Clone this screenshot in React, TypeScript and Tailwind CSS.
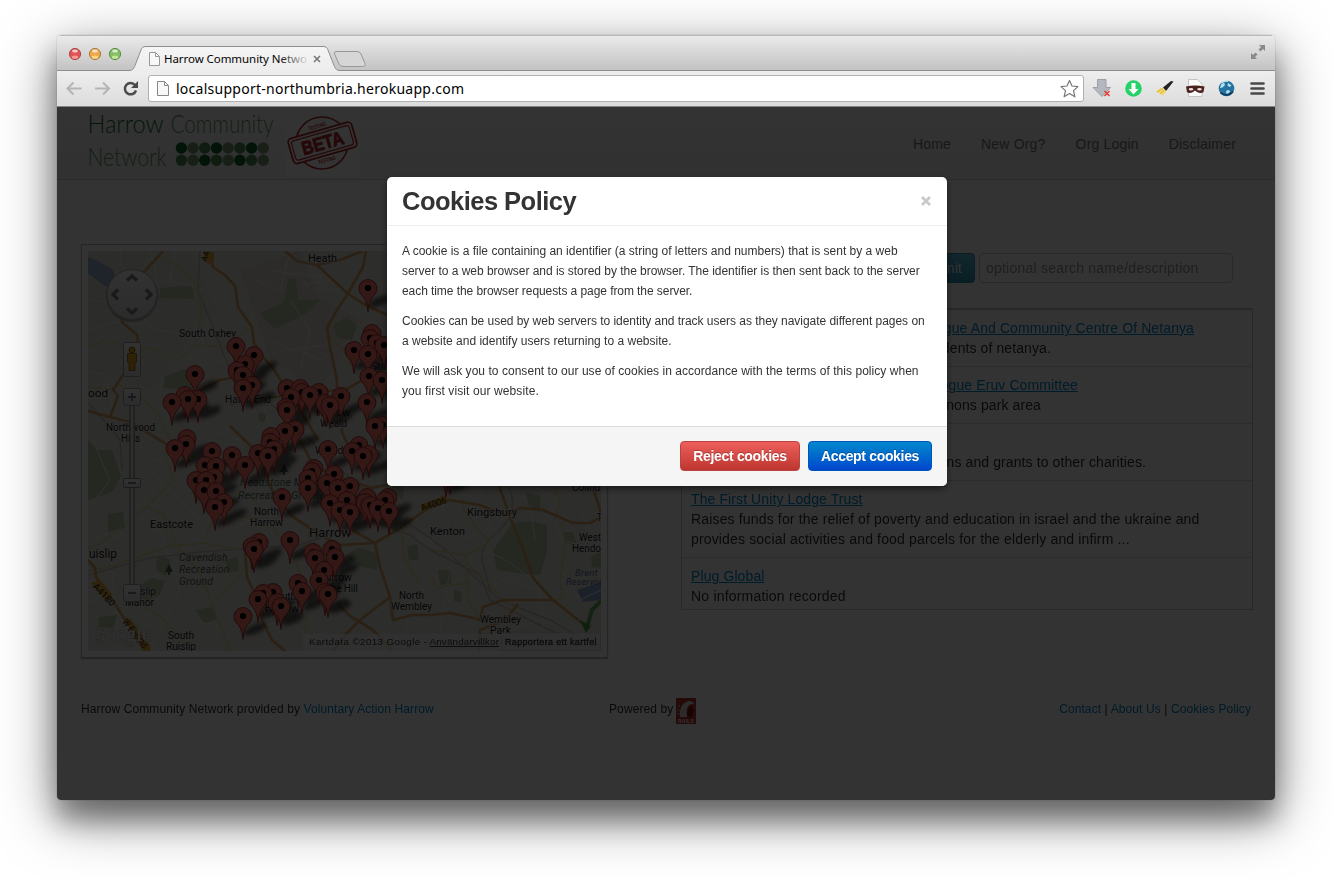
import React from "react";

const pins: [number, number][] = [
  [368, 288], [372, 333], [370, 338], [377, 343], [384, 345], [236, 346], [354, 350], [368, 354],
  [254, 355], [245, 364], [237, 370], [195, 374], [243, 375], [369, 376], [382, 380], [252, 385], [287, 388],
  [300, 388], [243, 388], [302, 392], [319, 392], [185, 395], [341, 396], [310, 395], [291, 397],
  [198, 399], [188, 399], [172, 402], [367, 402], [325, 403], [330, 405], [286, 407], [287, 410],
  [383, 425], [375, 426], [295, 429], [285, 431], [271, 436], [187, 438], [270, 442], [186, 444],
  [359, 445], [175, 448], [274, 449], [328, 449], [212, 451], [352, 451], [258, 453], [369, 454],
  [232, 455], [268, 456], [363, 456], [205, 465], [245, 465], [216, 466], [314, 468], [312, 471],
  [450, 471], [446, 473], [334, 474], [214, 477], [308, 478], [196, 480], [206, 480], [327, 483],
  [350, 486], [338, 488], [308, 488], [204, 490], [216, 491], [367, 497], [388, 497], [282, 497],
  [385, 500], [347, 500], [224, 502], [365, 502], [330, 503], [370, 505], [215, 507], [378, 508],
  [340, 510], [389, 511], [350, 512], [290, 540], [259, 542], [252, 546], [254, 549], [332, 549],
  [313, 552], [335, 557], [315, 558], [324, 570], [319, 580], [298, 583], [302, 591], [273, 592],
  [325, 592], [263, 593], [328, 594], [258, 599], [277, 602], [281, 606], [243, 616],
];

function Pin({ x, y }: { x: number; y: number }) {
  return (
    <g transform={`translate(${x} ${y})`}>
      <path d="M0 23.5C-.8 14-3 10.500-6.500 6.800A9 9 0 1 1 6.500 6.800C3 10.500.8 14 0 23.500Z" fill="#ff776d" stroke="#a83030" strokeWidth="1" />
      <circle r="3.100" fill="#000" />
    </g>
  );
}

const parks = [
  "M288 278L296 279 298 300 320 300 305 314 274 329 260 313 284 302Z",
  "M513 523L530 521 547 525 547 552 540 575 525 574 497 570 493 550Z",
  "M158 288L192 286 194 299 158 298Z",
  "M165 376L185 369 201 378 196 390 163 388Z",
  "M333 325L347 317 357 326 352 340 338 338Z",
  "M88 440L98 450 112 450 121 476 112 492 100 496 88 500Z",
  "M108 514L123 512 125 528 108 532Z",
  "M131 590L152 578 165 581 160 595 145 602Z",
  "M158 555L172 560 166 576 156 570Z",
  "M345 556L358 548 378 552 377 570 358 566Z",
  "M438 570L451 570 451 584 440 585Z",
  "M454 590L462 592 461 602 454 601Z",
  "M526 492L541 496 540 511 529 508Z",
  "M564 532L573 532 577 545 565 543Z",
  "M591 557L601 550 601 568 592 567Z",
  "M99 617L117 615 113 628 98 627Z",
  "M259 413L267 414 264 422 259 420Z",
  "M225 560L238 557 239 571 228 573Z",
  "M407 547L417 544 419 560 409 560Z",
  "M195 610L212 607 217 618 205 624Z",
  "M390 477L404 485 403 500 394 493Z",
];
const orange = [
  "M163 251L145 271 120 285 122 322 137 335 139 347 123 375 113 390 118 396 110 417",
  "M88 411L110 417 130 422 168 445 190 462",
  "M208 250L213 267 225 275 235 286 238 307 252 327 254 343 263 357 273 368 285 387 300 410 318 440",
  "M285 251L297 261 317 265 347 293 362 303 387 315",
  "M317 265L340 260 363 251",
  "M366 251L363 267 347 295 337 310 327 328 330 347 337 380 337 395 357 383 380 372 390 368",
  "M230 404L260 399 290 395 337 390",
  "M230 426L255 450 272 490 293 517 310 528 324 537 340 545 375 543 397 530 430 507 450 500 480 505 505 515 520 508 543 510 573 523 590 523 601 517",
  "M300 440L313 465 340 478 372 488 390 484",
  "M192 395L220 380 240 376",
  "M88 560L95 568 96 577 108 593 125 620 148 651",
  "M375 543L380 567 390 597 393 620 413 615 430 615 450 613 473 618 480 620 483 607 503 600 553 600",
  "M390 597L360 620 347 633 333 651",
  "M337 603L350 616 373 630 393 651",
  "M497 480L510 517 527 560 533 578 553 600 587 627",
  "M590 480L601 512",
  "M245 553L247 577 255 595 262 620 272 640 285 651",
  "M518 604L505 620 480 630 479 651",
  "M341 405L342 432 350 450",
  "M352 530L375 543",
];
const yellow = [
  "M160 257L180 267 195 283 202 310 195 345 178 361 165 352 150 348 138 350 105 340 88 347",
  "M195 345L225 347 250 328 253 326",
  "M88 387L110 389 120 385 133 392 150 405 160 418 172 443",
  "M163 450L174 480 146 507 100 544 88 548",
  "M146 507L164 515 178 547 200 573 220 625 230 651",
  "M88 571L115 565 170 546 205 543 240 550",
  "M128 567L135 600 165 620 190 651",
  "M250 493L275 530 295 560 310 600 305 635",
  "M329 335L343 350 355 372 380 398",
  "M430 550L466 555 490 542 480 532 464 510 463 498",
  "M466 555L468 600 480 620",
  "M430 575L437 588 470 582",
  "M562 522L565 545 560 580 562 598 553 600",
  "M468 564L490 585 503 600",
  "M555 486L560 505 554 520",
  "M400 520L405 560 420 585",
  "M215 600L240 575 255 560",
  "M205 540L212 520 240 515 270 528",
];
const minor = [
  "M88 300L130 305 155 330 200 335 210 360 240 365M120 251L125 285M88 330L115 322 140 325M175 251L170 280 205 290",
  "M270 270L300 275 310 290 345 288M290 300L310 330 300 370M255 280L280 290 290 251M350 310L385 330M330 251L345 275",
  "M88 370L105 375 115 420 150 470 200 520M88 430L110 480 88 510M130 430L150 460 200 455M150 251L160 290 130 350",
  "M88 530L130 540 160 530 180 590 150 651M190 515L230 530 250 520M110 550L115 610 140 640M88 600L110 605 130 630",
  "M190 620L240 630 290 620 320 651M300 520L290 560 330 570 350 620M370 550L410 570 430 600M355 585L380 590",
  "M400 500L420 540 460 560M400 535L430 540 450 570 440 630M480 490L490 530 460 540M440 500L450 530",
  "M500 580L540 590 545 640M460 590L500 620M550 500L560 540 601 550M555 560L580 600 601 590M530 505L535 540",
  "M470 560Q480 545 505 560T540 590M495 585Q515 570 530 590M480 640L540 620 570 630M410 600L405 640",
  "M210 430L240 440 250 480M260 400L280 450 330 460M300 350L320 360 350 340M270 340L290 350 325 345",
  "M295 270Q310 280 325 275M310 270L330 295M300 285L335 280M590 480L575 500 590 530M540 490L560 500",
];

const placeLabels: [number, number, string, number, number][] = [
  [308, 262, "Heath", 11.5, 29], [179, 337, "South Oxhey", 10.5, 57], [88, 397, "ood", 11.5, 20],
  [106, 431, "Northwood", 10, 49], [121, 442, "Hills", 10, 19], [225, 403, "Hatch End", 10.500, 46],
  [316, 416, "Harrow", 10, 34], [320, 427, "Weald", 10.5, 27], [315, 454, "Wealdstone", 10.5, 54],
  [371, 370, "Sta", 11.5, 15], [150, 528, "Eastcote", 11, 43], [89, 558, "uislip", 12, 28],
  [126, 595, "Ruislip", 10.5, 30], [125, 606, "Manor", 10.5, 29], [168, 639, "South", 10.5, 26],
  [166, 649.500, "Ruislip", 10.5, 30], [254, 515, "North", 10.5, 25], [250, 526, "Harrow", 10.5, 33],
  [309, 537, "Harrow", 12.500, 42], [318, 581, "Harrow", 10.5, 34], [314, 592, "on the Hill", 10.5, 44],
  [270, 600, "South", 10.5, 26], [265, 612, "Harrow", 10.5, 34], [467, 516, "Kingsbury", 11.5, 50],
  [430, 535, "Kenton", 11.5, 35], [572, 491, "Colind", 10.5, 28], [597, 521, "T", 10.5, 5],
  [579, 541, "West", 10.5, 22], [572, 552, "Hendo", 10.5, 29], [399, 599, "North", 10.5, 25],
  [391, 610, "Wembley", 10.5, 41], [480, 623, "Wembley", 10.5, 41], [490, 634, "Park", 10.5, 21],
];
const parkLabels: [number, number, string, number, string][] = [
  [240, 486, "Headstone Manor", 10.5, "#4f6a58"], [238, 499, "Recreation Ground", 10.5, "#4f6a58"],
  [179, 561, "Cavendish", 10.5, "#4f6a58"], [179, 573, "Recreation", 10.5, "#4f6a58"],
  [179, 585, "Ground", 10.5, "#4f6a58"], [575, 576, "Brent", 9.5, "#5573a8"], [566, 585, "Reservoi", 9.2, "#5573a8"],
];

function MapCanvas() {
  return (
    <svg viewBox="88 251 513 400" width="513" height="400" className="block" fontFamily="Roboto, sans-serif">
      <defs>
        <filter id="soft" x="-20%" y="-20%" width="140%" height="140%"><feGaussianBlur stdDeviation="2" /></filter>
        <linearGradient id="ctl" x1="0" y1="0" x2="0" y2="1"><stop stopColor="#fafafa" /><stop offset="1" stopColor="#d8d8d8" /></linearGradient>
      </defs>
      <rect x="88" y="251" width="513" height="400" fill="#e2dfd8" />
      <path d="M88 251H190L215 310 180 350 150 390 120 370 88 400Z" fill="#dbdad3" />
      <path d="M240 270L300 251 320 300 360 320 320 390 270 360Z" fill="#d9d5cc" />
      {parks.map((d) => <path key={d} d={d} fill="#b6c8a4" />)}
      <path d="M88 257L100 262 113 270 116 278 106 287 96 279 88 274Z" fill="#9aafd0" />
      <path d="M577 590L601 582V600L583 602Z" fill="#8ba3cc" />
      {minor.map((d) => <path key={d} d={d} fill="none" stroke="#f2f0ec" strokeWidth="1" />)}
      <path d="M200 251L198 290 220 345 230 370 290 420 330 460 375 500 440 545 500 600 550 620 601 650M88 402L120 440 122 470M88 575L150 558 200 552 300 545 370 520 410 535 430 550" fill="none" stroke="#bfbcb6" strokeWidth="1.4" />
      <path d="M430 550L480 575 490 600 540 625 560 635M508 486Q520 510 500 530Q480 545 482 560L490 590" fill="none" stroke="#bfbcb6" strokeWidth="1.500" />
      {yellow.map((d) => <path key={d} d={d} fill="none" stroke="#dcd592" strokeWidth="1.500" strokeLinejoin="round" />)}
      {orange.map((d) => <path key={d} d={d} fill="none" stroke="#d3a25f" strokeWidth="2.700" strokeLinejoin="round" />)}
      <path d="M601 601L592 610 587 627" fill="none" stroke="#5fa85a" strokeWidth="4" />
      <path d="M580 620L591 626 586 633Z" fill="#4a9a42" />
      <path d="M91 583L100 580 112 594 107 601ZM124 619L130 618 151 647 150 651H143Z" fill="#e3a93c" />
      <text transform="translate(92 587) rotate(46)" fontSize="9.500" fill="#222">A4180</text>
      <text transform="translate(122 622) rotate(52)" fontSize="9" textLength="34" lengthAdjust="spacingAndGlyphs" fill="#222">W End Rd</text>
      <path d="M204 252H214V260L209 264 204 260Z" fill="#e3a93c" />
      <text transform="translate(206 262) rotate(-70)" fontSize="8" fill="#222">A4</text>
      <path d="M420 505L446 495 448 502 423 512Z" fill="#e3a93c" />
      <text transform="translate(422 511) rotate(-18)" fontSize="9" fill="#222">A4006</text>
      {placeLabels.map(([x, y, t, s, w]) => (
        <text key={`${x}-${y}`} x={x} y={y} fontSize={s} textLength={w} lengthAdjust="spacingAndGlyphs" fill="#1c1c1c" stroke="#eceae5" strokeWidth="1.500" paintOrder="stroke">{t}</text>
      ))}
      {parkLabels.map(([x, y, t, s, c]) => (
        <text key={`${x}-${y}`} x={x} y={y} fontSize={s} letterSpacing=".2" fontStyle="italic" fill={c}>{t}</text>
      ))}
      <path d="M169 564L173 572H165ZM168 572H170V575H168ZM284 464L288 472H280ZM283 472H285V475H283Z" fill="#4f6a58" />
      <g filter="url(#soft)" opacity=".6">
        {pins.map(([x, y]) => <ellipse key={`${x}-${y}`} cx={x + 12} cy={y + 13} rx="12" ry="4.500" transform={`rotate(-24 ${x + 12} ${y + 13})`} fill="#000" />)}
      </g>
      {pins.map(([x, y]) => <Pin key={`${x}-${y}`} x={x} y={y} />)}

      <circle cx="132" cy="296" r="26" fill="#777" opacity=".5" />
      <circle cx="132" cy="294.500" r="25" fill="url(#ctl)" stroke="#aaa" />
      <path d="M127 280.500L132 276 137 280.500M127 308.500L132 313 137 308.500M118 289.500L113 294.500 118 299.500M146 289.500L151 294.500 146 299.500" fill="none" stroke="#808080" strokeWidth="3.400" />
      <rect x="123.500" y="342.500" width="17" height="34" rx="2" fill="url(#ctl)" stroke="#999" />
      <circle cx="132" cy="350" r="3" fill="#e5a31c" stroke="#8c6010" />
      <path d="M127.500 353.500H136.500V362H135V370.500H129V362H127.500Z" fill="#e5a31c" stroke="#8c6010" strokeWidth=".8" />
      <rect x="130" y="404" width="4" height="182" fill="#e5e5e5" stroke="#777" strokeWidth="1" />
      <rect x="123.500" y="388.500" width="17" height="17" rx="2" fill="url(#ctl)" stroke="#999" />
      <path d="M128 397H136M132 393V401" stroke="#777" strokeWidth="1.800" />
      <rect x="123.500" y="478.500" width="17" height="9" rx="1" fill="url(#ctl)" stroke="#888" />
      <path d="M128 483H136" stroke="#777" strokeWidth="1.800" />
      <rect x="123.500" y="584.500" width="17" height="17" rx="2" fill="url(#ctl)" stroke="#999" />
      <path d="M128 593H136" stroke="#777" strokeWidth="1.800" />

      <rect x="303" y="634" width="298" height="17" fill="#f5f5f2" opacity=".65" />
      <rect x="501.500" y="632.500" width="99" height="18" fill="#f5f5f5" stroke="#cfcfcf" opacity=".6" />
      <g fontFamily="Liberation Sans, sans-serif" fontSize="9.800" fill="#3a3a3a">
        <text x="309" y="645" textLength="118">Kartdata ©2013 Google -</text>
        <text x="429.500" y="645" textLength="69.500">Användarvillkor</text>
        <path d="M429.500 646.500H499" stroke="#444" />
        <text x="505" y="645" fontSize="9" textLength="91.500" stroke="#333" strokeWidth=".3">Rapportera ett kartfel</text>
      </g>
      <text x="91" y="641" fontFamily="Liberation Serif, serif" fontSize="21" textLength="60" lengthAdjust="spacingAndGlyphs" fill="#f2f2f2" stroke="#a9a9a9" strokeWidth="1" paintOrder="stroke">Google</text>
    </svg>
  );
}

function HarrowLogo() {
  const D = "#0b5f2b";
  const M = "#4d8a4b";
  const L = "#769a74";
  const tones = [D, L, M, D, L, M, D, L, M, L, D, M, L, D, M, L];
  return (
    <svg viewBox="88 107 188 65" width="188" height="65" className="overflow-visible" fontFamily="Lato, sans-serif" fontWeight="300" fontSize="25">
      <text x="87.500" y="133" textLength="76" lengthAdjust="spacingAndGlyphs" fill="#147036">Harrow</text>
      <text x="170.500" y="133" textLength="103" lengthAdjust="spacingAndGlyphs" fill="#5f9866">Community</text>
      <text x="87.500" y="165.500" textLength="79" lengthAdjust="spacingAndGlyphs" fill="#5f9866">Network</text>
      {tones.map((c, i) => <circle key={i} cx={181.400 + (i % 8) * 11.700} cy={i < 8 ? 148 : 160.300} r="5.700" fill={c} />)}
    </svg>
  );
}

function BetaStamp() {
  return (
    <svg viewBox="285 112 75 65" width="75" height="65" fontFamily="Liberation Sans, sans-serif" fontWeight="700" fill="#b52a2a">
      <rect x="285" y="112" width="75" height="65" fill="#fff" />
      <circle cx="322" cy="143" r="26" fill="none" stroke="#b52a2a" strokeWidth="1.600" />
      <g transform="rotate(-16 322 143)">
        <rect x="289.500" y="130" width="66" height="26" rx="4" fill="#fff" stroke="#b52a2a" strokeWidth="1.800" />
        <rect x="292.500" y="133" width="60" height="20" rx="2.500" fill="none" stroke="#b52a2a" strokeWidth="1.200" />
        <text x="301" y="149.800" fontSize="19" textLength="43" lengthAdjust="spacingAndGlyphs" stroke="#b52a2a" strokeWidth=".9">BETA</text>
        <text x="313" y="127.500" fontSize="5.500" textLength="18" lengthAdjust="spacingAndGlyphs">TESTING</text>
        <text x="313" y="162.500" fontSize="5.500" textLength="18" lengthAdjust="spacingAndGlyphs">TESTING</text>
      </g>
    </svg>
  );
}

function PageIcon() {
  return (
    <svg width="12" height="15" viewBox="0 0 12 15" className="shrink-0">
      <path d="M.5.5H7.500L11.500 4.500V14.500H.5Z" fill="#f8f8f8" stroke="#888" />
      <path d="M7.500.5V4.500H11.500" fill="none" stroke="#888" />
    </svg>
  );
}

function TabStrip() {
  const lights = [["#e35257", "#a8474a", "#ffb9ae"], ["#eda84a", "#a87a3c", "#ffe9a0"], ["#86c064", "#5d8a48", "#d8f7ab"]];
  return (
    <div className="flex h-9 rounded-t-[4px] bg-linear-to-b from-[#ebebeb] to-[#c2c2c2]">
      <svg viewBox="57 35 1218 36" width="1218" height="36">
        <defs>
          <linearGradient id="fade"><stop offset=".8" stopColor="#000" /><stop offset="1" stopColor="#000" stopOpacity=".1" /></linearGradient>
          <linearGradient id="tab" x1="0" y1="0" x2="0" y2="1"><stop stopColor="#f5f5f5" /><stop offset="1" stopColor="#ececec" /></linearGradient>
        </defs>
        <path d="M60 35.500H1272" stroke="#b9b9b9" />
        <path d="M57 70.500H1275" stroke="#8e8e8e" />
        {lights.map(([c, s, h], i) => (
          <g key={c}>
            <circle cx={75 + i * 20} cy="54" r="5.600" fill={c} stroke={s} strokeWidth="1" />
            <ellipse cx={75 + i * 20} cy="51" rx="2.900" ry="1.500" fill="#fff" opacity=".7" />
            <ellipse cx={75 + i * 20} cy="57.200" rx="3.200" ry="1.600" fill={h} opacity=".7" />
          </g>
        ))}
        <path d="M129 70.500C133 70.500 134 68 135 65.500L141 50C142 47.500 143 46.500 146 46.500H323C326 46.500 327 47.500 328 50L334 65.500C335 68 336 70.500 340 70.500V72H129Z" fill="url(#tab)" />
        <path d="M129 70.500C133 70.500 134 68 135 65.500L141 50C142 47.500 143 46.500 146 46.500H323C326 46.500 327 47.500 328 50L334 65.500C335 68 336 70.500 340 70.500" fill="none" stroke="#8e8e8e" />
        <path d="M336 51.500H357Q360 51.500 361 54L365 63.500Q366 66.500 362.500 66.500H343Q340 66.500 339 64L334.500 54Q334 51.500 336 51.500Z" fill="#d6d6d6" stroke="#979797" />
        <g transform="translate(149 52)">
          <path d="M.5.5H6.500L10.500 4.500V13.500H.5Z" fill="#f8f8f8" stroke="#999" />
          <path d="M6.500.5V4.500H10.500" fill="none" stroke="#999" />
        </g>
        <text x="164" y="63" fontFamily="Noto Sans, sans-serif" fontSize="11.500" textLength="143" fill="url(#fade)">Harrow Community Netwo</text>
        <path d="M314 56L320 62M320 56L314 62" stroke="#777" strokeWidth="1.600" />
        <path d="M1259 45H1265V51L1263 49 1260.500 51.500 1258.500 49.500 1261 47ZM1257 59H1251V53L1253 55 1255.500 52.500 1257.500 54.500 1255 57Z" fill="#8a8a8a" />
      </svg>
    </div>
  );
}

function Toolbar() {
  return (
    <div className="flex h-9 items-center border-b border-[#858585] bg-linear-to-b from-[#eeeeee] to-[#dcdcdc] pl-[9px]">
      <svg viewBox="66 78 76 22" width="76" height="22" fill="none">
        <path d="M81.500 88.500H68M73.500 82.500L67.500 88.500 73.500 94.500" stroke="#b5b5b5" strokeWidth="2" />
        <path d="M95 88.500H108.500M103 82.500L109 88.500 103 94.500" stroke="#b5b5b5" strokeWidth="2" />
        <path d="M135 85A5.700 5.700 0 1 0 136 90.500" stroke="#4b4b4b" strokeWidth="2.500" />
        <path d="M138 81V88H131Z" fill="#4b4b4b" />
      </svg>
      <div className="ml-[6px] flex h-[27px] w-[936px] items-center rounded-[3px] border border-[#b0b0b0] bg-white pl-2">
        <PageIcon />
        <svg width="300" height="24" className="ml-[7px]">
          <text x="0" y="17" fontFamily="Noto Sans, sans-serif" fontSize="14" textLength="288" fill="#000">localsupport-northumbria.herokuapp.com</text>
        </svg>
        <svg viewBox="1060 79 20 20" width="20" height="20" className="mr-[3px] ml-auto">
          <path d="M1069.500 80.500L1072 86 1078 86.600 1073.500 90.600 1074.900 96.800 1069.500 93.500 1064.100 96.800 1065.500 90.600 1061 86.600 1067 86Z" fill="#fff" stroke="#777" strokeWidth="1.200" strokeLinejoin="round" />
        </svg>
      </div>
      <svg viewBox="1084 76 191 26" width="191" height="26">
        <path d="M1097.500 79.500H1106V87.500H1110.500L1102 96.500 1093 87.500H1097.500Z" fill="#b4b8be" stroke="#9b9fa5" />
        <path d="M1104.500 91L1109.500 96M1109.500 91L1104.500 96" stroke="#e53935" strokeWidth="1.500" />
        <circle cx="1133.500" cy="88.500" r="8.300" fill="#24d268" />
        <path d="M1131.500 83H1135.500V89H1138.500L1133.500 94.500 1128.500 89H1131.500Z" fill="#fff" />
        <path d="M1163 87.500L1171 81 1173.500 81.500 1166 91Z" fill="#222" />
        <path d="M1161 87.500L1166.500 91 1163 95.500 1156 91.500Z" fill="#f1d768" />
        <path d="M1157 92L1163 88.500M1160 94L1164.500 90" stroke="#c9a93c" strokeWidth=".8" />
        <path d="M1188.500 96.500V79.500H1197.500L1202 84V96.500Z" fill="#fafafa" stroke="#c4c4c4" />
        <path d="M1186 86.500Q1195 84.500 1204.500 86.500L1203.500 92Q1201 94 1197 92L1195 90.500 1193 92Q1189 94 1187 92Z" fill="#4a211e" />
        <ellipse cx="1191" cy="89.300" rx="2.300" ry="1.200" fill="#e8dfdf" /><ellipse cx="1199.500" cy="89.300" rx="2.300" ry="1.200" fill="#e8dfdf" />
        <circle cx="1226.500" cy="88.500" r="7.800" fill="#2474a0" />
        <path d="M1221 84.500L1224 82.500 1225 85 1222.500 87.500 1220 88ZM1228 83L1231.500 85.500 1229.500 87 1227.500 85.500ZM1226.500 90.500L1229 90 1230 92 1227 94.500 1226 92.500Z" fill="#b9dfee" />
        <path d="M1220.500 92.500Q1227 98 1233 91.500" fill="none" stroke="#123d63" strokeWidth="1.800" />
        <path d="M1221 83Q1224 80.500 1228 81.300" fill="none" stroke="#c9e8f2" strokeWidth="1.200" />
        <path d="M1251.500 83.500H1263.500M1251.500 88.500H1263.500M1251.500 93.500H1263.500" stroke="#484848" strokeWidth="2.600" strokeLinecap="round" />
      </svg>
    </div>
  );
}

const results = [
  { name: "Synagogue And Community Centre Of Netanya", info: "For residents of netanya.", a: "w-[503px] text-right", b: "w-[360px] text-right" },
  { name: "Synagogue Eruv Committee", info: "Canons park area", a: "w-[387px] text-right", b: "w-[350px] text-right" },
  { name: "Charity", info: "Donations and grants to other charities.", a: "w-[200px]", b: "w-[455px] text-right" },
  { name: "The First Unity Lodge Trust", info: "Raises funds for the relief of poverty and education in israel and the ukraine and provides social activities and food parcels for the elderly and infirm ...", a: "", b: "tracking-[0.155px]" },
  { name: "Plug Global", info: "No information recorded", a: "", b: "tracking-[0.2px]" },
];

function Site() {
  return (
    <div className="flex h-[693px] flex-col bg-white text-[#333]">
      <header className="flex h-[73px] shrink-0 items-start border-b border-[#d4d4d4] bg-linear-to-b from-white to-[#f2f2f2] pl-[31px]">
        <HarrowLogo />
        <div className="pt-[5px] pl-[9px]"><BetaStamp /></div>
        <nav className="mt-[27px] mr-[39px] ml-auto flex gap-[30px] text-[14px] leading-5 tracking-[0.19px] text-[#777]">
          <a>Home</a><a>New Org?</a><a>Org Login</a><a>Disclaimer</a>
        </nav>
      </header>
      <main className="flex pt-[64px] pl-6">
        <div className="h-[414px] w-[527px] border border-[#bbb] p-1.5 shadow-[0_1px_1px_rgba(0,0,0,.3)]"><MapCanvas /></div>
        <section className="ml-[73px] w-[572px] pt-[9px] text-[14px] leading-5 tracking-[0.1px]">
          <div className="flex justify-end gap-1 pr-[20px]">
            <button className="h-[30px] w-[70px] rounded-[4px] border border-[#2f96b4] bg-linear-to-b from-[#5bc0de] to-[#2f96b4] text-white">Submit</button>
            <div className="flex h-[30px] w-[254px] items-center rounded-[4px] border border-[#ccc] px-1.5 tracking-[0.22px] text-[#999]">optional search name/description</div>
          </div>
          <div className="mt-[25px] flex flex-col border border-t-2 border-[#c8c8c8]">
            {results.map((r, i) => (
              <div key={r.name} className={i === 4 ? "h-[51px] px-[9px] pt-2" : i === 3 ? "h-[77px] border-b border-[#ddd] px-[9px] pt-2" : "h-[57px] border-b border-[#ddd] px-[9px] pt-2"}>
                <div className={r.a}><a className="whitespace-nowrap text-[#0088cc] underline">{r.name}</a></div>
                <div className={r.b}>{r.info}</div>
              </div>
            ))}
          </div>
        </section>
      </main>
      <footer className="mt-[40px] flex h-[26px] items-center pr-6 pl-6 text-[12px] tracking-[0.1px]">
        <div className="-mt-1 w-[528px]">Harrow Community Network provided by <a className="text-[#0088cc]">Voluntary Action Harrow</a></div>
        <span className="-mt-1 w-[67px] whitespace-nowrap">Powered by</span>
        <svg width="20" height="26" viewBox="0 0 20 26">
          <rect width="20" height="26" rx="1" fill="#b33" />
          <path d="M4 19Q3 5 13 3Q17 3 18 6Q9 5 11 19Z" fill="#ddd" />
          <path d="M12 19Q10 9 16 8L18 12 16 19Z" fill="#711" />
          <path d="M2 8H4M1.500 12H3.500M1.500 16H3.500" stroke="#ddd" />
          <text x="2" y="24.500" fontSize="5" fontWeight="700" fontFamily="Liberation Sans, sans-serif" fill="#fff" textLength="16">RAILS</text>
        </svg>
        <div className="-mt-1 ml-auto whitespace-nowrap text-[#333]"><a className="text-[#0088cc]">Contact</a> | <a className="text-[#0088cc]">About Us</a> | <a className="text-[#0088cc]">Cookies Policy</a></div>
      </footer>
    </div>
  );
}

function CookieDialog() {
  return (
    <div className="absolute top-[142px] left-[330px] flex h-[309px] w-[560px] flex-col overflow-hidden rounded-[5px] bg-white text-[#333] shadow-[0_3px_7px_rgba(0,0,0,.5)]">
      <div className="flex h-[49px] items-center justify-between border-b border-[#eee] pr-4 pl-[15px]">
        <h3 className="text-[25.5px] leading-[30px] font-bold tracking-[-0.52px]">Cookies Policy</h3>
        <svg width="10" height="10" viewBox="0 0 10 10"><path d="M1 1L9 9M9 1L1 9" stroke="#c9c9c9" strokeWidth="2.700" /></svg>
      </div>
      <div className="flex flex-1 flex-col gap-2.5 pt-[15px] pl-[15px] text-[12px] leading-5 whitespace-nowrap">
        <p>A cookie is a file containing an identifier (a string of letters and numbers) that is sent by a web<br /><span className="tracking-[-0.03px]">server to a web browser and is stored by the browser. The identifier is then sent back to the server</span><br /><span className="tracking-[-0.07px]">each time the browser requests a page from the server.</span></p>
        <p><span className="tracking-[-0.035px]">Cookies can be used by web servers to identity and track users as they navigate different pages on</span><br />a website and identify users returning to a website.</p>
        <p><span className="tracking-[0.04px]">We will ask you to consent to our use of cookies in accordance with the terms of this policy when</span><br /><span className="tracking-[0.1px]">you first visit our website.</span></p>
      </div>
      <div className="flex h-[60px] justify-end gap-2 border-t border-[#ddd] bg-[#f5f5f5] pt-[14px] pr-[15px] text-[14px] font-bold tracking-[-0.33px] text-white">
        <button className="h-[30px] w-[120px] rounded-[4px] border border-[#b94440] bg-linear-to-b from-[#ee5f5b] to-[#bd362f] [text-shadow:0_-1px_0_rgba(0,0,0,.25)]">Reject cookies</button>
        <button className="h-[30px] w-[124px] rounded-[4px] border border-[#0055bb] bg-linear-to-b from-[#0088cc] to-[#0044cc] [text-shadow:0_-1px_0_rgba(0,0,0,.25)]">Accept cookies</button>
      </div>
    </div>
  );
}

export default function App() {
  return (
    <div className="h-[879px] w-[1332px] overflow-hidden bg-white pt-[35px] pl-[57px] font-['Liberation_Sans',sans-serif]">
      <div className="relative h-[765px] w-[1218px] rounded-[4px] shadow-[0_0_1px_rgba(0,0,0,.5),0_20px_26px_rgba(0,0,0,.34),0_16px_56px_rgba(0,0,0,.5)]">
        <TabStrip />
        <Toolbar />
        <div className="relative overflow-hidden rounded-b-[4px]">
          <Site />
          <div className="absolute inset-0 bg-black/80" />
        </div>
        <CookieDialog />
      </div>
    </div>
  );
}
